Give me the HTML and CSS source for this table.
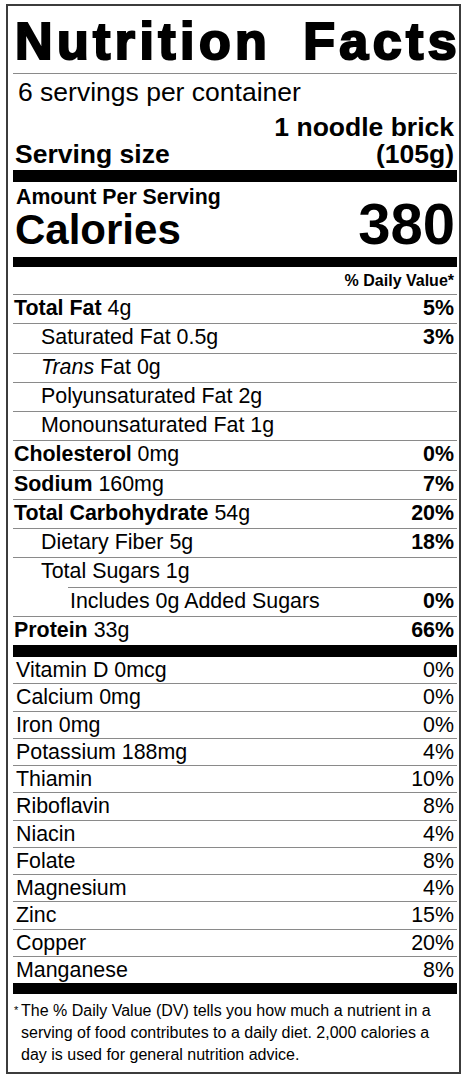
FILE: index.html
```html
<!DOCTYPE html>
<html lang="en">
<head>
<meta charset="utf-8">
<title>Nutrition Facts</title>
<link rel="stylesheet" href="styles.css">
</head>
<body>
<section class="label">
  <header class="title"><span>Nutrition</span><span class="facts">Facts</span></header>
  <div class="servings">6 servings per container</div>
  <div class="serving-size">
    <span>Serving size</span>
    <span class="ss-val"><span class="ss-line">1 noodle brick</span><span class="ss-line">(105g)</span></span>
  </div>
  <div class="bar bar-thick"></div>
  <div class="calories">
    <div class="cal-left">
      <div class="amount">Amount Per Serving</div>
      <div class="cal-label">Calories</div>
    </div>
    <div class="cal-value">380</div>
  </div>
  <div class="bar bar-medium"></div>
  <div class="dv-head">% Daily Value*</div>
  <div class="nutrients">
    <div class="row"><span><b>Total Fat</b> 4g</span><b>5%</b></div>
    <div class="row indent"><span>Saturated Fat 0.5g</span><b>3%</b></div>
    <div class="row indent"><span><i>Trans</i> Fat 0g</span></div>
    <div class="row indent"><span>Polyunsaturated Fat 2g</span></div>
    <div class="row indent"><span>Monounsaturated Fat 1g</span></div>
    <div class="row"><span><b>Cholesterol</b> 0mg</span><b>0%</b></div>
    <div class="row"><span><b>Sodium</b> 160mg</span><b>7%</b></div>
    <div class="row"><span><b>Total Carbohydrate</b> 54g</span><b>20%</b></div>
    <div class="row indent"><span>Dietary Fiber 5g</span><b>18%</b></div>
    <div class="row indent"><span>Total Sugars 1g</span></div>
    <div class="row added"><span>Includes 0g Added Sugars</span><b>0%</b></div>
    <div class="row"><span><b>Protein</b> 33g</span><b>66%</b></div>
  </div>
  <div class="bar bar-thick"></div>
  <div class="vitamins">
    <div class="vrow"><span>Vitamin D 0mcg</span><span>0%</span></div>
    <div class="vrow"><span>Calcium 0mg</span><span>0%</span></div>
    <div class="vrow"><span>Iron 0mg</span><span>0%</span></div>
    <div class="vrow"><span>Potassium 188mg</span><span>4%</span></div>
    <div class="vrow"><span>Thiamin</span><span>10%</span></div>
    <div class="vrow"><span>Riboflavin</span><span>8%</span></div>
    <div class="vrow"><span>Niacin</span><span>4%</span></div>
    <div class="vrow"><span>Folate</span><span>8%</span></div>
    <div class="vrow"><span>Magnesium</span><span>4%</span></div>
    <div class="vrow"><span>Zinc</span><span>15%</span></div>
    <div class="vrow"><span>Copper</span><span>20%</span></div>
    <div class="vrow"><span>Manganese</span><span>8%</span></div>
  </div>
  <div class="bar bar-foot"></div>
  <footer class="footnote">
    <span class="ast">*</span>
    <p>The % Daily Value (DV) tells you how much a nutrient in a serving of food contributes to a daily diet. 2,000 calories a day is used for general nutrition advice.</p>
  </footer>
</section>
</body>
</html>
```

FILE: styles.css
```css
* {
  box-sizing: border-box;
  margin: 0;
  padding: 0;
}

body {
  margin: 0;
  background: #fff;
  color: #000;
  font-family: "Liberation Sans", Arial, Helvetica, sans-serif;
}

.label {
  margin: 4px 0 0 6px;
  width: 455px;
  height: 1070px;
  border: 2px solid #3c3c3c;
  padding: 0 2px 0 5px;
}

.title {
  display: flex;
  justify-content: space-between;
  font-size: 52px;
  line-height: 51px;
  font-weight: 700;
  letter-spacing: 4.4px;
  -webkit-text-stroke: 2.2px #000;
  padding: 10px 0 6px 2px;
  border-bottom: 1px solid #8a8a8a;
}

.title .facts {
  margin-right: -4px;
}

.servings {
  font-size: 26.5px;
  line-height: 30px;
  padding: 3px 0 0 5px;
}

.serving-size {
  display: flex;
  justify-content: space-between;
  align-items: flex-end;
  margin-top: 7px;
  font-size: 26.5px;
  line-height: 26.5px;
  font-weight: 700;
  padding: 0 3px 0 2px;
}

.ss-val {
  display: flex;
  flex-direction: column;
  align-items: flex-end;
}

.bar {
  background: #000;
}

.bar-thick {
  height: 12px;
}

.serving-size + .bar-thick {
  margin-top: 3px;
}

.bar-medium {
  height: 10px;
  margin-top: 7px;
}

.bar-foot {
  height: 11px;
}

.calories {
  display: flex;
  justify-content: space-between;
  align-items: flex-end;
  font-weight: 700;
  padding: 3px 2px 0 2px;
}

.amount {
  font-size: 21.3px;
  line-height: 24px;
  padding-left: 1px;
}

.cal-label {
  font-size: 42px;
  line-height: 41px;
}

.cal-value {
  font-size: 58px;
  line-height: 52px;
}

.dv-head {
  font-size: 16px;
  line-height: 20px;
  font-weight: 700;
  text-align: right;
  padding: 4px 3px 3px 0;
}

.row {
  display: flex;
  justify-content: space-between;
  font-size: 21.4px;
  line-height: 27.25px;
  padding: 0 3px 1px 1px;
  border-top: 1px solid #8a8a8a;
}

.row.indent {
  padding-left: 28px;
}

.row.added {
  margin-left: 55px;
  padding-left: 2px;
}

.vrow {
  display: flex;
  justify-content: space-between;
  font-size: 21.4px;
  line-height: 26.25px;
  padding: 0 3px 0 3px;
}

.vrow + .vrow {
  border-top: 1px solid #8a8a8a;
}

.footnote {
  display: flex;
  padding: 6px 0 0 0;
  font-size: 16px;
  line-height: 22px;
}

.ast {
  flex: none;
  width: 8px;
  font-size: 11px;
  line-height: 14px;
  padding-top: 3px;
  padding-left: 1px;
}
```
